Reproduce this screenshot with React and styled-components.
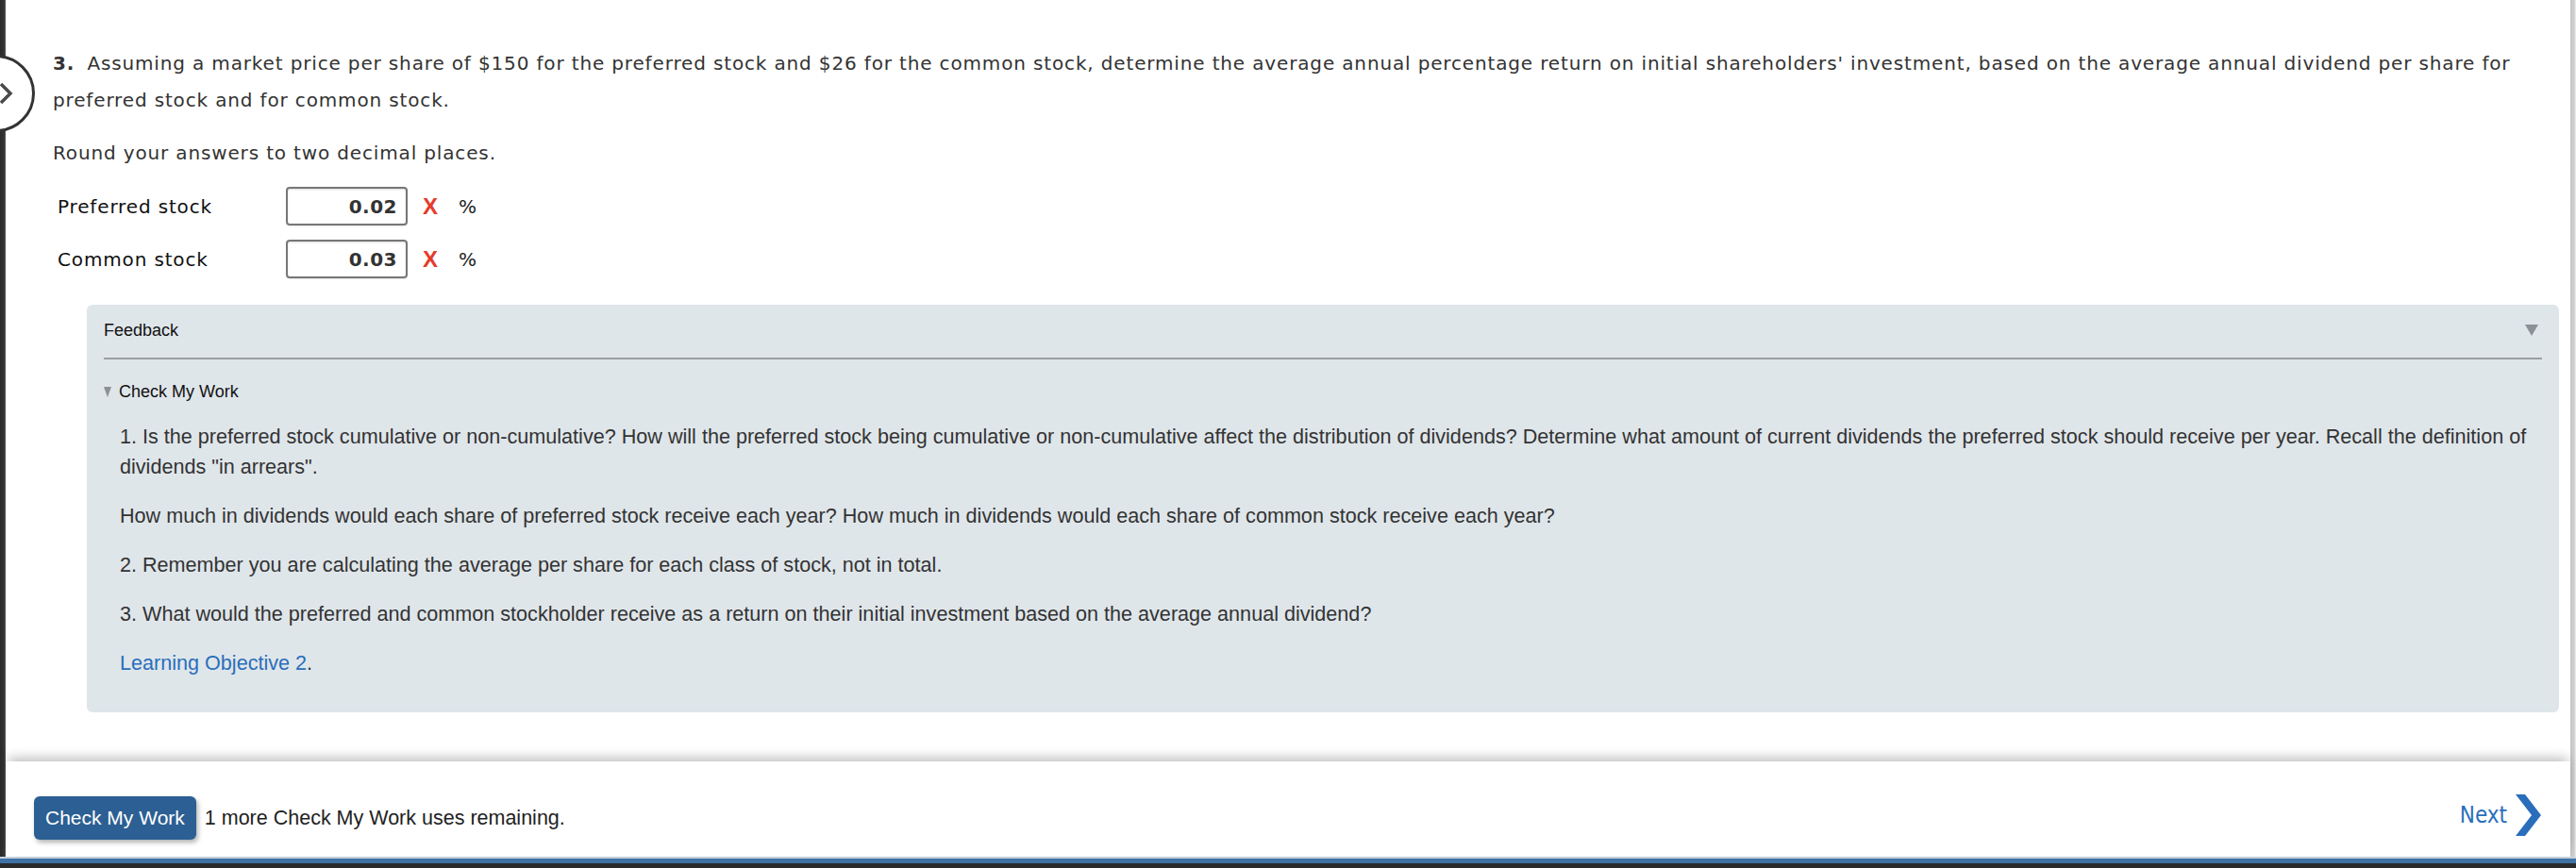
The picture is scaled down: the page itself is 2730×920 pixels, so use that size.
import React from 'react';
import styled, { createGlobalStyle } from 'styled-components';

const Global = createGlobalStyle`
  html, body {
    margin: 0;
    padding: 0;
    background: #ffffff;
  }
  * { box-sizing: border-box; }
`;

const Page = styled.div`
  width: 2730px;
  height: 920px;
  display: flex;
  flex-direction: column;
  overflow: hidden;
`;

const Frame = styled.div`
  position: relative;
  display: flex;
  height: 908px;
`;

const LeftRail = styled.div`
  width: 6px;
  background: linear-gradient(to right, #2a2a2a, #333 70%, #5a5a5a);
`;

const RightRail = styled.div`
  width: 6px;
  background: linear-gradient(to right, #c4c4c4, #d2d2d2 70%, #f2f2f2);
`;

const Main = styled.div`
  flex: 1;
  display: flex;
  flex-direction: column;
  background: #fff;
`;

const Content = styled.div`
  flex: 1;
  padding: 48px 12px 0 50px;
  font-family: "DejaVu Sans", Verdana, sans-serif;
  color: #333;
`;

const NavCircle = styled.div`
  position: absolute;
  left: -45px;
  top: 58px;
  width: 82px;
  height: 82px;
  border: 3px solid #333;
  border-radius: 50%;
  background: #fff;
  display: flex;
  align-items: center;
  padding-left: 42px;
`;

const Question = styled.p`
  margin: 0;
  font-size: 20px;
  line-height: 39px;
  letter-spacing: 0.85px;
  b { font-weight: bold; margin-right: 6px; }
`;

const Hint = styled.p`
  margin: 17px 0 16px;
  font-size: 20px;
  line-height: 39px;
  letter-spacing: 0.85px;
`;

const AnswerRow = styled.div`
  display: flex;
  align-items: center;
  height: 41px;
  margin-bottom: 15px;
  font-size: 20px;
  letter-spacing: 0.85px;
`;

const RowLabel = styled.div`
  width: 247px;
  padding-left: 5px;
  color: #111;
`;

const ValueBox = styled.div`
  width: 129px;
  height: 41px;
  border: 2px solid #777;
  border-radius: 4px;
  box-shadow: inset 0 1px 2px rgba(0,0,0,0.15), 0 1px 1px rgba(0,0,0,0.1);
  display: flex;
  align-items: center;
  justify-content: flex-end;
  padding-right: 9px;
  font-weight: bold;
  font-size: 20px;
  letter-spacing: 0.5px;
  color: #333;
`;

const WrongMark = styled.span`
  margin-left: 16px;
  width: 38px;
  font-family: "Liberation Sans", Arial, sans-serif;
  font-weight: bold;
  font-size: 24px;
  color: #e53b2c;
`;

const Unit = styled.span`
  font-size: 20px;
  color: #222;
`;

const FeedbackPanel = styled.section`
  margin: 28px 0 0 36px;
  background: #dfe6ea;
  border-radius: 6px;
  padding: 0 18px 36px;
  font-family: "Liberation Sans", Arial, Helvetica, sans-serif;
`;

const PanelHeader = styled.div`
  height: 58px;
  display: flex;
  align-items: center;
  justify-content: space-between;
  border-bottom: 2px solid #9a9fa3;
  font-size: 18px;
  color: #111;
  padding-bottom: 2px;
`;

const DownTriangle = styled.span`
  width: 0;
  height: 0;
  border-left: ${p => p.$w / 2}px solid transparent;
  border-right: ${p => p.$w / 2}px solid transparent;
  border-top: ${p => p.$h}px solid ${p => p.$color || '#8a9096'};
  margin-right: ${p => p.$mr || 0}px;
`;

const Toggle = styled.div`
  display: flex;
  align-items: center;
  gap: 8px;
  margin-top: 22px;
  height: 24px;
  font-size: 18px;
  color: #111;
`;

const Body = styled.div`
  padding-left: 17px;
  padding-top: 3px;
`;

const Para = styled.p`
  margin: 17px 0 0;
  font-size: 21.6px;
  line-height: 32px;
  color: #333;
  & + & { margin-top: 20px; }
`;

const Link = styled.a`
  color: #2a6ebb;
  text-decoration: none;
`;

const Footer = styled.footer`
  position: relative;
  height: 101px;
  display: flex;
  align-items: center;
  padding: 19px 31px 0 30px;
  background: #fff;
  box-shadow: 0 -6px 12px -3px rgba(0,0,0,0.28);
  font-family: "Liberation Sans", Arial, Helvetica, sans-serif;
`;

const CheckButton = styled.button`
  height: 46px;
  padding: 0 12px;
  border: none;
  border-radius: 6px;
  background: #2c5f93;
  color: #fff;
  font-family: "Liberation Sans", Arial, Helvetica, sans-serif;
  font-size: 21px;
  box-shadow: 2px 3px 5px rgba(0,0,0,0.3);
  cursor: pointer;
`;

const Remaining = styled.span`
  margin-left: 9px;
  font-size: 21.5px;
  color: #222;
`;

const NextLink = styled.a`
  margin-left: auto;
  display: flex;
  align-items: center;
  gap: 9px;
  font-family: "DejaVu Sans Condensed", "DejaVu Sans", sans-serif;
  font-size: 24px;
  color: #2a6ebb;
  text-decoration: none;
  margin-top: -6px;
`;

const BottomBar = styled.div`
  height: 12px;
  border-top: 2px solid #c8d3dd;
  border-bottom: 5px solid #2b2b2b;
  background: #3f72a6;
`;

const answers = [
  { label: 'Preferred stock', value: '0.02' },
  { label: 'Common stock', value: '0.03' },
];

const hints = [
  '1. Is the preferred stock cumulative or non-cumulative? How will the preferred stock being cumulative or non-cumulative affect the distribution of dividends? Determine what amount of current dividends the preferred stock should receive per year. Recall the definition of dividends "in arrears".',
  'How much in dividends would each share of preferred stock receive each year? How much in dividends would each share of common stock receive each year?',
  '2. Remember you are calculating the average per share for each class of stock, not in total.',
  '3. What would the preferred and common stockholder receive as a return on their initial investment based on the average annual dividend?',
];

export default function App() {
  return (
    <Page>
      <Global />
      <Frame>
        <LeftRail />
        <NavCircle>
          <svg width="14" height="24" viewBox="0 0 14 24">
            <polyline points="1,2 11,12 1,22" fill="none" stroke="#4a4a4a" strokeWidth="3.5" />
          </svg>
        </NavCircle>
        <Main>
          <Content>
            <Question>
              <b>3.</b> Assuming a market price per share of $150 for the preferred stock and $26 for the common stock, determine the average annual percentage return on initial shareholders' investment, based on the average annual dividend per share for preferred stock and for common stock.
            </Question>
            <Hint>Round your answers to two decimal places.</Hint>
            {answers.map(a => (
              <AnswerRow key={a.label}>
                <RowLabel>{a.label}</RowLabel>
                <ValueBox>{a.value}</ValueBox>
                <WrongMark>X</WrongMark>
                <Unit>%</Unit>
              </AnswerRow>
            ))}
            <FeedbackPanel>
              <PanelHeader>
                <span>Feedback</span>
                <DownTriangle $w={14} $h={12} $mr={4} />
              </PanelHeader>
              <Toggle>
                <DownTriangle $w={8} $h={11} $color="#8b9095" />
                <span>Check My Work</span>
              </Toggle>
              <Body>
                {hints.map((h, i) => <Para key={i}>{h}</Para>)}
                <Para><Link href="#">Learning Objective 2</Link>.</Para>
              </Body>
            </FeedbackPanel>
          </Content>
          <Footer>
            <CheckButton>Check My Work</CheckButton>
            <Remaining>1 more Check My Work uses remaining.</Remaining>
            <NextLink href="#">
              Next
              <svg width="27" height="44" viewBox="0 0 27 44">
                <polygon points="0,0 10,0 27,22 10,44 0,44 17,22" fill="#2a6ebb" />
              </svg>
            </NextLink>
          </Footer>
        </Main>
        <RightRail />
      </Frame>
      <BottomBar />
    </Page>
  );
}
